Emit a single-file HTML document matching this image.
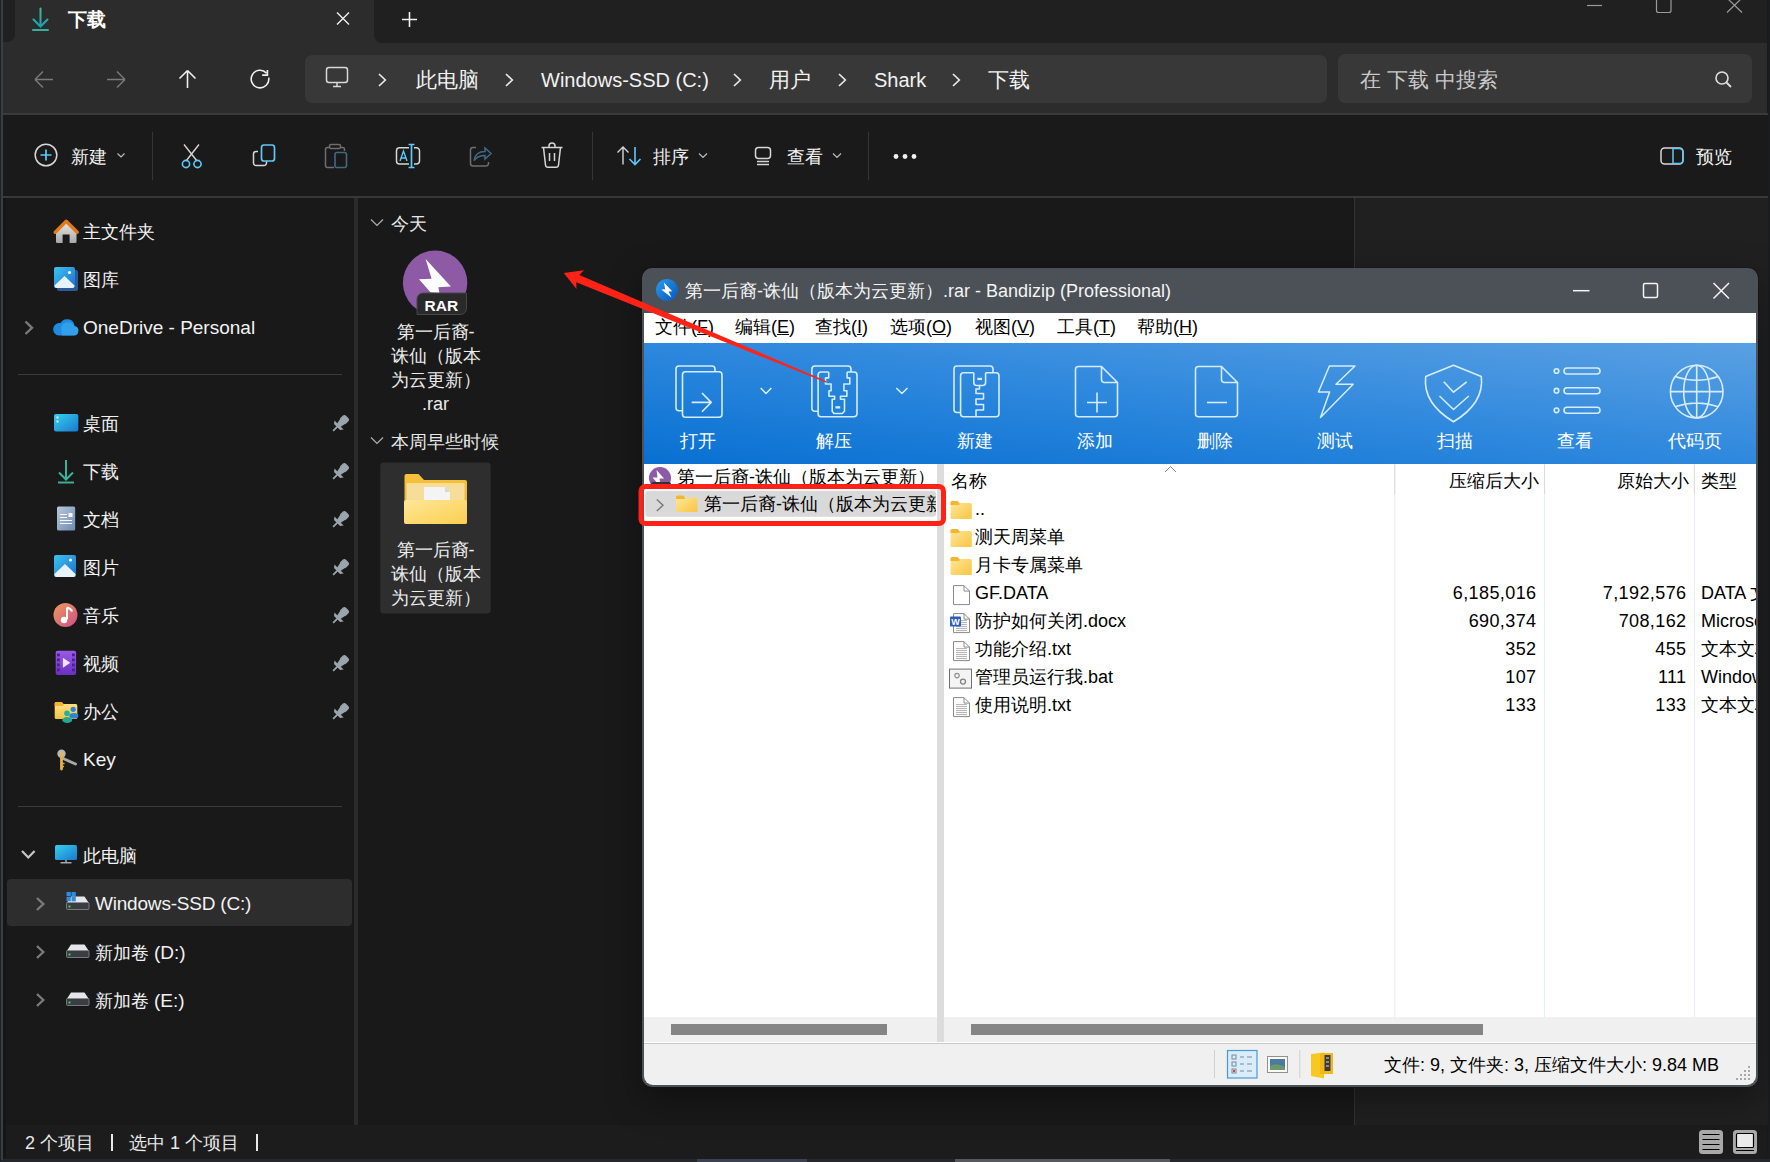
<!DOCTYPE html>
<html><head><meta charset="utf-8">
<style>
*{margin:0;padding:0;box-sizing:border-box}
html,body{width:1770px;height:1162px;overflow:hidden;background:#1a1c1e;font-family:"Liberation Sans",sans-serif;}
.a{position:absolute}
.t{position:absolute;white-space:nowrap;line-height:1}
svg{position:absolute;overflow:visible}
#exp{left:0;top:0;width:1768px;height:1160px;background:#191919;border-radius:0 0 8px 8px;overflow:hidden}
</style></head><body>
<div class="a" style="left:0;top:0;width:3px;height:1162px;background:#2a2d31"></div>
<div id="exp" class="a">

  <!-- title bar dark pieces -->
  <div class="a" style="left:0;top:0;width:1767px;height:113px;background:#2c2c2c"></div>
  <div class="a" style="left:0;top:0;width:15px;height:42px;background:#202020;border-radius:0 0 8px 0"></div>
  <div class="a" style="left:374px;top:0;width:1393px;height:43px;background:#202020;border-radius:0 0 0 8px"></div>
  <div class="a" style="left:15px;top:-8px;width:359px;height:51px;background:#2c2c2c;border-radius:8px 8px 0 0"></div>
  <!-- tab icon -->
  <svg style="left:0;top:0" width="60" height="40"><defs><linearGradient id="dl" x1="0" y1="0" x2="0" y2="1"><stop offset="0" stop-color="#3fbf8f"/><stop offset="1" stop-color="#1aa0b8"/></linearGradient></defs>
   <path d="M40.5 8.5V26.5M33.5 19.5L40.5 26.5L47.5 19.5" stroke="url(#dl)" stroke-width="2" fill="none" stroke-linecap="round"/>
   <path d="M33 30H48" stroke="#2fb49c" stroke-width="2" stroke-linecap="round"/></svg>
  <div class="t" style="left:67.5px;top:11px;font-size:18.5px;font-weight:bold;color:#fff">下载</div>
  <svg style="left:0;top:0" width="430" height="40"><path d="M337 12.5L349 24.5M349 12.5L337 24.5" stroke="#f0f0f0" stroke-width="1.4"/>
   <path d="M402 19.5H417M409.5 12V27" stroke="#f0f0f0" stroke-width="1.6"/></svg>
  <!-- window controls -->
  <svg style="left:0;top:0" width="1767" height="40"><path d="M1587 5.5H1602" stroke="#9a9a9a" stroke-width="1.2"/>
   <path d="M1656.5 -4V10.5a2 2 0 0 0 2 2H1669a2 2 0 0 0 2-2V-4" stroke="#9a9a9a" stroke-width="1.2" fill="none"/>
   <path d="M1727 -2L1742 12.5M1742 -2L1727 12.5" stroke="#9a9a9a" stroke-width="1.2"/></svg>
  <!-- nav -->
  <svg style="left:0;top:0" width="300" height="110">
   <path d="M35 79.5H53M35 79.5L43 71.5M35 79.5L43 87.5" stroke="#7a7a7a" stroke-width="1.5" fill="none"/>
   <path d="M107 79.5H125M125 79.5L117 71.5M125 79.5L117 87.5" stroke="#7a7a7a" stroke-width="1.5" fill="none"/>
   <path d="M187.5 70.5V88M187.5 70.5L179.5 78.5M187.5 70.5L195.5 78.5" stroke="#f0f0f0" stroke-width="1.6" fill="none"/>
   <path d="M266.5 73.1A8.8 8.8 0 1 0 268.7 77.6" stroke="#f0f0f0" stroke-width="1.6" fill="none"/>
   <path d="M262.2 75.2H267.4V70.1" stroke="#f0f0f0" stroke-width="1.7" fill="none"/>
  </svg>
  <!-- breadcrumb -->
  <div class="a" style="left:305px;top:54.5px;width:1022px;height:48.5px;background:#383838;border-radius:7px"></div>
  <svg style="left:0;top:0" width="1100" height="110">
   <rect x="326.5" y="67.5" width="21" height="15" rx="2.5" stroke="#d8d8d8" stroke-width="1.5" fill="none"/>
   <path d="M333 86.5H341M337 83V86.5" stroke="#d8d8d8" stroke-width="1.5"/>
   <g stroke="#e8e8e8" stroke-width="1.7" fill="none"><path d="M379 74L385.3 80L379 86"/><path d="M506 74L512.3 80L506 86"/><path d="M734 74L740.3 80L734 86"/><path d="M839 74L845.3 80L839 86"/><path d="M953 74L959.3 80L953 86"/></g>
  </svg>
  <div class="t" style="left:416px;top:69px;font-size:21px;color:#f2f2f2">此电脑</div>
  <div class="t" style="left:541px;top:69.5px;font-size:20px;color:#f2f2f2">Windows-SSD (C:)</div>
  <div class="t" style="left:769px;top:69px;font-size:21px;color:#f2f2f2">用户</div>
  <div class="t" style="left:874px;top:69.5px;font-size:20px;color:#f2f2f2">Shark</div>
  <div class="t" style="left:988px;top:69px;font-size:21px;color:#f2f2f2">下载</div>
  <!-- search -->
  <div class="a" style="left:1338px;top:54px;width:414px;height:49px;background:#383838;border-radius:7px"></div>
  <div class="t" style="left:1360px;top:69px;font-size:21px;color:#c8c8c8">在 下载 中搜索</div>
  <svg style="left:0;top:0" width="1767" height="110"><circle cx="1722" cy="78" r="6" stroke="#e0e0e0" stroke-width="1.6" fill="none"/><path d="M1726.5 82.5L1731 87" stroke="#e0e0e0" stroke-width="1.8"/></svg>
  <div class="a" style="left:0;top:113px;width:1768px;height:2px;background:#3a3a3a"></div>
  <!-- toolbar -->
  <div class="a" style="left:0;top:115px;width:1768px;height:81px;background:#1a1a1a"></div>
  <div class="a" style="left:0;top:196px;width:1768px;height:2px;background:#383838"></div>

  <!-- toolbar content -->
  <svg style="left:0;top:0" width="1767" height="196">
   <g fill="none" stroke-width="1.5">
    <circle cx="46" cy="155" r="10.8" stroke="#d6d6d6"/>
    <path d="M46 149.5V160.5M40.5 155H51.5" stroke="#60c8f8" stroke-width="1.7"/>
    <path d="M117.5 153.5L121 157L124.5 153.5" stroke="#bbb" stroke-width="1.2"/>
    <path d="M152.5 132V180M592.5 132V180M868.5 132V180" stroke="#353535" stroke-width="1"/>
    <!-- scissors -->
    <path d="M184 144.5L197 161M199 144.5L186 161" stroke="#d6d6d6" stroke-width="1.4"/>
    <circle cx="186" cy="164" r="3.6" stroke="#60c8f8" stroke-width="1.6"/><circle cx="197.5" cy="164" r="3.6" stroke="#60c8f8" stroke-width="1.6"/>
    <!-- copy -->
    <path d="M258 151.5H256a2.5 2.5 0 0 0-2.5 2.5V163a2.5 2.5 0 0 0 2.5 2.5H264a2.5 2.5 0 0 0 2.5-2.5V161" stroke="#d6d6d6"/>
    <rect x="261.5" y="145" width="13" height="16" rx="2.5" stroke="#60c8f8" stroke-width="1.7"/>
    <!-- paste dim -->
    <path d="M329 147.5H327.5a2 2 0 0 0-2 2V165.5a2 2 0 0 0 2 2H334M341 147.5H342.5a2 2 0 0 1 2 2V151" stroke="#6e6e6e"/>
    <rect x="329.5" y="144.5" width="11" height="4" rx="1.5" stroke="#6e6e6e"/>
    <rect x="335" y="152.5" width="11.5" height="15" rx="2" stroke="#3f6a82" stroke-width="1.6"/>
    <!-- rename -->
    <path d="M409 147.8H399.5a3 3 0 0 0-3 3V161a3 3 0 0 0 3 3H409M414 147.8H416.5a3 3 0 0 1 3 3V161a3 3 0 0 1-3 3H414" stroke="#d6d6d6"/>
    <path d="M400 161L403.5 151L407 161M401.2 158H405.8" stroke="#60c8f8" stroke-width="1.4"/>
    <path d="M411.5 144.5V167.5M408.5 144.5H414.5M408.5 167.5H414.5" stroke="#60c8f8" stroke-width="1.7"/>
    <!-- share dim -->
    <path d="M476 147.5H473a2.5 2.5 0 0 0-2.5 2.5V163.5a2.5 2.5 0 0 0 2.5 2.5H486a2.5 2.5 0 0 0 2.5-2.5V162" stroke="#6e6e6e"/>
    <path d="M474 160.5C475 154 480 151.5 485 151.5V148L491 153.5L485 159V155.5C480 155.5 476.5 157 474 160.5Z" stroke="#3f6a82" stroke-width="1.5"/>
    <!-- delete -->
    <path d="M541.5 147.5H562.5M549 147.5V146a3 3 0 0 1 6 0V147.5M543.5 147.5L545.5 165a2.5 2.5 0 0 0 2.5 2.3H556a2.5 2.5 0 0 0 2.5-2.3L560.5 147.5M549.5 153V161M554.5 153V161" stroke="#d6d6d6" stroke-width="1.5"/>
    <!-- sort -->
    <path d="M623 164.5V147M617.5 152.5L623 147L628.5 152.5" stroke="#d6d6d6" stroke-width="1.4"/>
    <path d="M635 147V164.5M629.5 159L635 164.5L640.5 159" stroke="#60c8f8" stroke-width="1.6"/>
    <path d="M699 153.5L703 157.5L707 153.5M833 153.5L837 157.5L841 153.5" stroke="#bbb" stroke-width="1.2"/>
    <!-- view -->
    <rect x="755.5" y="147.5" width="15" height="11" rx="3" stroke="#d6d6d6" stroke-width="1.5"/>
    <path d="M757 161.5H769M757 164.5H769" stroke="#d6d6d6" stroke-width="1.4"/>
    <!-- preview -->
    <rect x="1661" y="148" width="22" height="16" rx="3.5" stroke="#d6d6d6" stroke-width="1.5"/>
    <path d="M1673 148.5H1679.5a3.3 3.3 0 0 1 3.3 3.3V160.2a3.3 3.3 0 0 1-3.3 3.3H1673Z" stroke="#60c8f8" stroke-width="1.5"/>
   </g>
   <circle cx="896" cy="156.5" r="2.4" fill="#f0f0f0"/><circle cx="905" cy="156.5" r="2.4" fill="#f0f0f0"/><circle cx="914" cy="156.5" r="2.4" fill="#f0f0f0"/>
  </svg>
  <div class="t" style="left:71px;top:147.5px;font-size:18px;color:#f2f2f2">新建</div>
  <div class="t" style="left:653px;top:147.5px;font-size:18px;color:#f2f2f2">排序</div>
  <div class="t" style="left:787px;top:147.5px;font-size:18px;color:#f2f2f2">查看</div>
  <div class="t" style="left:1696px;top:147.5px;font-size:18px;color:#f2f2f2">预览</div>
  <!-- preview pane -->
  <div class="a" style="left:1354px;top:198px;width:414px;height:927px;background:#202020;border-left:1px solid #333"></div>
  <!-- sidebar divider -->
  <div class="a" style="left:354px;top:198px;width:4px;height:927px;background:#2a2a2a"></div>

  <!-- content -->
  <svg style="left:0;top:0" width="520" height="630">
   <defs>
    <linearGradient id="fb" x1="0" y1="0" x2="0" y2="1"><stop offset="0" stop-color="#f7c23a"/><stop offset="1" stop-color="#eab02e"/></linearGradient>
    <linearGradient id="ff" x1="0" y1="0" x2="1" y2="1"><stop offset="0" stop-color="#ffe79a"/><stop offset="1" stop-color="#fbcf4e"/></linearGradient>
   </defs>
   <path d="M371 219.5L377 225.5L383 219.5M371 437.5L377 443.5L383 437.5" stroke="#b0b0b0" stroke-width="1.2" fill="none"/>
   <circle cx="435.1" cy="282.8" r="32.2" fill="#8e5aa6"/>
   <path d="M425.6 259.1L450.9 286.6L438.3 287.2L439.5 293L430.7 292.6L419 279.3L431.6 278.7Z" fill="#fff"/>
   <path d="M417 314.5V299a6 6 0 0 1 6-6H466.5V308.5a6 6 0 0 1-6 6Z" fill="#2a2a2a" stroke="#474747" stroke-width="1"/>
   <rect x="380.3" y="462.5" width="110.3" height="151" rx="3" fill="#2e2e2e"/>
   <path d="M404.5 476a2 2 0 0 1 2-2H418.5L424 480H465a2 2 0 0 1 2 2V522a2 2 0 0 1-2 2H406.5a2 2 0 0 1-2-2Z" fill="url(#fb)"/>
   <rect x="406.5" y="483" width="58" height="30" rx="1" fill="#f6dd9a"/>
   <path d="M424 487H445L450 492V505H424Z" fill="#f4f4f4"/><path d="M445 487V492H450" fill="#d8d8d8"/>
   <path d="M404 502a2 2 0 0 1 2-2H465a2 2 0 0 1 2 2V522a2 2 0 0 1-2 2H406a2 2 0 0 1-2-2Z" fill="url(#ff)"/>
  </svg>
  <div class="t" style="left:424.5px;top:298px;font-size:15.5px;font-weight:bold;color:#fff">RAR</div>
  <div class="t" style="left:391px;top:215px;font-size:18px;color:#e8e8e8">今天</div>
  <div class="t" style="left:391px;top:433px;font-size:18px;color:#e8e8e8">本周早些时候</div>
  <div class="a" style="left:380px;top:320px;width:111px;text-align:center;font-size:18px;line-height:24px;color:#ececec;white-space:nowrap">第一后裔-<br>诛仙（版本<br>为云更新）<br>.rar</div>
  <div class="a" style="left:380px;top:538px;width:111px;text-align:center;font-size:18px;line-height:24px;color:#ececec;white-space:nowrap">第一后裔-<br>诛仙（版本<br>为云更新）</div>
  <!-- status bar -->
  <div class="a" style="left:0;top:1125px;width:1767px;height:35px;background:#1c1c1c"></div>
  <!-- sidebar -->
  <div class="a" style="left:18px;top:374px;width:324px;height:1px;background:#3a3a3a"></div>
  <div class="a" style="left:18px;top:806px;width:324px;height:1px;background:#3a3a3a"></div>
  <div class="a" style="left:7px;top:879px;width:345px;height:47px;background:#2d2d2d;border-radius:4px"></div>
  <svg style="left:0;top:0" width="360" height="1020">
   <defs>
    <linearGradient id="hb" x1="0" y1="0" x2="0" y2="1"><stop offset="0" stop-color="#e8e8e8"/><stop offset="1" stop-color="#a8a8a8"/></linearGradient>
    <linearGradient id="bl" x1="0" y1="0" x2="1" y2="1"><stop offset="0" stop-color="#3cc4f0"/><stop offset="1" stop-color="#1a6fd0"/></linearGradient>
    <linearGradient id="cy" x1="0" y1="0" x2="1" y2="1"><stop offset="0" stop-color="#34d0ee"/><stop offset="1" stop-color="#1b78cf"/></linearGradient>
    <linearGradient id="dc" x1="0" y1="0" x2="1" y2="1"><stop offset="0" stop-color="#b8c8dc"/><stop offset="1" stop-color="#6d8bb0"/></linearGradient>
    <linearGradient id="mu" x1="0" y1="0" x2="1" y2="1"><stop offset="0" stop-color="#f29a5a"/><stop offset="1" stop-color="#c8508a"/></linearGradient>
    <linearGradient id="vi" x1="0" y1="0" x2="0" y2="1"><stop offset="0" stop-color="#9a5ae8"/><stop offset="1" stop-color="#6a30c0"/></linearGradient>
    <linearGradient id="fo" x1="0" y1="0" x2="0" y2="1"><stop offset="0" stop-color="#ffe48a"/><stop offset="1" stop-color="#f5c242"/></linearGradient>
   </defs>
   <!-- home -->
   <path d="M56 232V241.8a1.3 1.3 0 0 0 1.3 1.3H62.6V234.5H69.6V243.1H75.2a1.3 1.3 0 0 0 1.3-1.3V232L66.2 222Z" fill="url(#hb)"/>
   <path d="M55.2 232.2L66.2 221.3L77.2 232.2" stroke="#e27a18" stroke-width="3.4" fill="none" stroke-linejoin="round" stroke-linecap="round"/>
   <!-- gallery -->
   <rect x="57" y="270" width="21" height="21" rx="2" fill="#2a5a9a"/>
   <rect x="54" y="267" width="21" height="21" rx="2" fill="url(#bl)"/>
   <path d="M54.5 285.5L64.5 276L74.5 285.5V286a2 2 0 0 1-2 2H56.5a2 2 0 0 1-2-2Z" fill="#e8f2fc"/>
   <circle cx="69.5" cy="272.5" r="1.6" fill="#fff"/>
   <!-- onedrive -->
   <path d="M25.5 321.5L32 327.8L25.5 334" stroke="#7a7a7a" stroke-width="2.4" fill="none"/>
   <path d="M58.5 335.5H73.5a4.8 4.8 0 0 0 1-9.5 7.5 7.5 0 0 0-14-3 5.8 5.8 0 0 0-2 12.5Z" fill="#1e8ae0"/>
   <path d="M61 327a7.5 7.5 0 0 1 13.5-1 4.8 4.8 0 0 1 -1 9.5H62Z" fill="#3aa8f0" opacity=".7"/>
   <!-- desktop -->
   <rect x="54" y="414" width="24.3" height="17.6" rx="2" fill="url(#cy)"/>
   <rect x="56.5" y="416.5" width="2" height="2" fill="#e6f6ff"/><rect x="56.5" y="420.5" width="2" height="2" fill="#e6f6ff"/>
   <!-- downloads -->
   <path d="M66 460V479.5M59 472.5L66 479.5L73 472.5" stroke="#38b49a" stroke-width="2" fill="none"/>
   <path d="M58 482.5H74" stroke="#3cae94" stroke-width="2"/>
   <!-- docs -->
   <rect x="57" y="506.6" width="18.2" height="24" rx="1.5" fill="url(#dc)"/>
   <path d="M60 514.5H67M60 517.5H67M60 520.5H72M60 523.5H72" stroke="#f4f6fa" stroke-width="1.2"/>
   <rect x="68.5" y="513" width="4" height="4" fill="#f4f6fa"/>
   <!-- pictures -->
   <rect x="54" y="555" width="22" height="22" rx="2" fill="url(#bl)"/>
   <path d="M54.5 574L65 564L75.5 574V575a2 2 0 0 1-2 2H56.5a2 2 0 0 1-2-2Z" fill="#e8f2fc"/>
   <circle cx="70.5" cy="560" r="1.6" fill="#fff"/>
   <!-- music -->
   <circle cx="65.5" cy="615" r="12" fill="url(#mu)"/>
   <path d="M67 607.5V619.5" stroke="#fff" stroke-width="2"/><path d="M67 607.5Q71 608.5 72 611.5" stroke="#fff" stroke-width="2.2" fill="none"/>
   <circle cx="64" cy="620" r="3.2" fill="#fff"/>
   <!-- video -->
   <rect x="55.7" y="650.8" width="20.4" height="24.2" rx="2" fill="url(#vi)"/>
   <g fill="#4a2090"><rect x="57" y="653.5" width="2.8" height="2.8"/><rect x="57" y="658.5" width="2.8" height="2.8"/><rect x="57" y="663.5" width="2.8" height="2.8"/><rect x="57" y="668.5" width="2.8" height="2.8"/>
   <rect x="72" y="653.5" width="2.8" height="2.8"/><rect x="72" y="658.5" width="2.8" height="2.8"/><rect x="72" y="663.5" width="2.8" height="2.8"/><rect x="72" y="668.5" width="2.8" height="2.8"/></g>
   <path d="M62.9 657.8L70.3 662.8L62.9 667.8Z" fill="#f0e4ff"/>
   <!-- office folder -->
   <path d="M54.7 703.5a1.5 1.5 0 0 1 1.5-1.5H61.5L63.5 704H75.8a1.5 1.5 0 0 1 1.5 1.5V717.5a1.5 1.5 0 0 1-1.5 1.5H56.2a1.5 1.5 0 0 1-1.5-1.5Z" fill="url(#fo)"/>
   <path d="M54.7 703.5a1.5 1.5 0 0 1 1.5-1.5H61.5L63.5 704V706H54.7Z" fill="#f2b531"/>
   <circle cx="73.2" cy="709.3" r="2.6" fill="#2a86d6"/><ellipse cx="73.8" cy="715.8" rx="4.6" ry="2.8" fill="#2a86d6"/>
   <circle cx="67" cy="713.3" r="2.8" fill="#25b09a"/><ellipse cx="67.2" cy="720" rx="5" ry="3" fill="#23a894"/>
   <!-- key -->
   <path d="M62 758L75.5 764" stroke="#a8a8a8" stroke-width="3" stroke-linecap="round"/>
   <circle cx="61.5" cy="753.8" r="4.2" fill="#b8b8b8"/>
   <path d="M61.5 755V769" stroke="#e8b04a" stroke-width="2.8" stroke-linecap="round"/>
   <path d="M62.5 763.5H64.5M62.5 766.5H64" stroke="#e8b04a" stroke-width="1.4"/>
   <circle cx="61.5" cy="753.5" r="1.6" fill="#e6b850"/>
   <!-- pins -->
   <g fill="#9aa4aa">
    <path id="pin" transform="translate(338.9 425.2) rotate(45) scale(1.2)" d="M-3.3 -8a1.7 1.7 0 0 1 1.7-1.7H1.6a1.7 1.7 0 0 1 1.7 1.7V-4.3H-3.3ZM-3 -4.6H3L1.8 0.5H-1.8ZM-5.4 -0.2H5.4L3.6 2.2H-3.6ZM-0.75 1.5H0.75V6.8H-0.75Z"/>
    <use href="#pin" y="48"/><use href="#pin" y="96"/><use href="#pin" y="144"/><use href="#pin" y="192"/><use href="#pin" y="240"/><use href="#pin" y="288"/>
   </g>
   <!-- this pc -->
   <path d="M22 851L28.3 857.5L34.6 851" stroke="#c8c8c8" stroke-width="2.2" fill="none"/>
   <rect x="55" y="845" width="22" height="15" rx="1.5" fill="url(#cy)"/>
   <path d="M60.5 862.8H71.5M66 860V862.5" stroke="#a0a8b0" stroke-width="1.6"/>
   <!-- drives -->
   <g stroke="#7a7a7a" stroke-width="2.4" fill="none"><path d="M37 898L43.3 904L37 910"/><path d="M37 946L43.3 952L37 958"/><path d="M37 994L43.3 1000L37 1006"/></g>
   <g id="drv">
    <path d="M66.8 903L71 896.5H84.5L88.8 903Z" fill="#e4e6ea"/>
    <rect x="66.5" y="902.5" width="22.5" height="7" rx="1" fill="#3a3d42" stroke="#8a8c90" stroke-width=".8"/>
    <rect x="68.5" y="905.5" width="2" height="2" fill="#4ad04a"/>
   </g>
   <use href="#drv" y="48"/><use href="#drv" y="96"/>
   <rect x="66.5" y="892" width="4.3" height="4.3" fill="#2d8de0"/><rect x="71.5" y="892" width="4.3" height="4.3" fill="#2d8de0"/>
   <rect x="66.5" y="897" width="4.3" height="4.3" fill="#2d8de0"/><rect x="71.5" y="897" width="4.3" height="4.3" fill="#2d8de0"/>
  </svg>
  <div class="t" style="left:83px;top:222.5px;font-size:18px;color:#f2f2f2">主文件夹</div>
  <div class="t" style="left:83px;top:270.5px;font-size:18px;color:#f2f2f2">图库</div>
  <div class="t" style="left:83px;top:318px;font-size:19px;color:#f2f2f2">OneDrive - Personal</div>
  <div class="t" style="left:83px;top:414.5px;font-size:18px;color:#f2f2f2">桌面</div>
  <div class="t" style="left:83px;top:462.5px;font-size:18px;color:#f2f2f2">下载</div>
  <div class="t" style="left:83px;top:510.5px;font-size:18px;color:#f2f2f2">文档</div>
  <div class="t" style="left:83px;top:558.5px;font-size:18px;color:#f2f2f2">图片</div>
  <div class="t" style="left:83px;top:606.5px;font-size:18px;color:#f2f2f2">音乐</div>
  <div class="t" style="left:83px;top:654.5px;font-size:18px;color:#f2f2f2">视频</div>
  <div class="t" style="left:83px;top:702.5px;font-size:18px;color:#f2f2f2">办公</div>
  <div class="t" style="left:83px;top:750px;font-size:19px;color:#f2f2f2">Key</div>
  <div class="t" style="left:83px;top:846.5px;font-size:18px;color:#f2f2f2">此电脑</div>
  <div class="t" style="left:95px;top:894px;font-size:19px;color:#f2f2f2;letter-spacing:-0.2px">Windows-SSD (C:)</div>
  <div class="t" style="left:95px;top:942.5px;font-size:18px;color:#f2f2f2">新加卷 <span style="font-size:19px">(D:)</span></div>
  <div class="t" style="left:95px;top:990.5px;font-size:18px;color:#f2f2f2">新加卷 <span style="font-size:19px">(E:)</span></div>
  <!-- status bar -->
  <div class="t" style="left:25px;top:1133.5px;font-size:18px;color:#e8e8e8">2 个项目</div>
  <div class="a" style="left:111px;top:1134px;width:2px;height:17px;background:#e8e8e8"></div>
  <div class="t" style="left:129px;top:1133.5px;font-size:18px;color:#e8e8e8">选中 1 个项目</div>
  <div class="a" style="left:256px;top:1134px;width:2px;height:17px;background:#e8e8e8"></div>

</div>

<!-- Bandizip window -->
<div class="a" style="left:642px;top:268px;width:1116px;height:819px;background:#4b5157;border-radius:10px;box-shadow:0 0 0 1px rgba(20,20,20,.5),0 12px 36px rgba(0,0,0,.38)"></div>
<svg style="left:0;top:0" width="1770" height="1162">
 <defs>
  <linearGradient id="bzb" x1="0" y1="0" x2="0" y2="1"><stop offset="0" stop-color="#2f8ce6"/><stop offset="1" stop-color="#006fd6"/></linearGradient>
  <linearGradient id="bzi" x1="0" y1="0" x2="1" y2="1"><stop offset="0" stop-color="#2a9af0"/><stop offset="1" stop-color="#0a56b8"/></linearGradient>
 </defs>
 <circle cx="667" cy="290" r="11" fill="url(#bzi)"/>
 <path d="M663.9 282.6L672.2 291.2L668.6 291.4L671.4 297.6L661.3 289.4L665.2 289.3Z" fill="#fff"/>
 <g stroke="#f4f4f4" stroke-width="1.5" fill="none">
  <path d="M1573 290.7H1589.5"/>
  <rect x="1643.5" y="283.5" width="14" height="14" rx="1.5"/>
  <path d="M1713.5 283L1729 298.5M1729 283L1713.5 298.5"/>
 </g>
</svg>
<div class="t" style="left:685px;top:281.5px;font-size:18px;color:#f4f4f4">第一后裔-诛仙（版本为云更新）<span>.rar - Bandizip (Professional)</span></div>
<!-- client -->
<div class="a" style="left:644px;top:313px;width:1112px;height:772px;background:#f0f0f0;border-radius:0 0 9px 9px;overflow:hidden">
 <div class="a" style="left:0;top:0;width:1112px;height:30px;background:#fff"></div>
 <div class="a" style="left:0;top:30px;width:1112px;height:120.5px;background:linear-gradient(to top right,#0870d2 0%,#2e88dd 50%,#5aa0e3 100%)"></div>
 <div class="a" style="left:0;top:150.5px;width:293px;height:553.5px;background:#fff"></div>
 <div class="a" style="left:293px;top:150.5px;width:7px;height:579.5px;background:#dcdcdc"></div>
 <div class="a" style="left:300px;top:150.5px;width:812px;height:553.5px;background:#fff"></div>
 <div class="a" style="left:0;top:729px;width:1112px;height:1px;background:#fff"></div><div class="a" style="left:0;top:730px;width:1112px;height:1px;background:#c8c8c8"></div>
</div>

<!-- bandizip menu -->
<div class="t" style="left:655px;top:317.5px;font-size:18px;color:#000">文件(<u>F</u>)</div>
<div class="t" style="left:735px;top:317.5px;font-size:18px;color:#000">编辑(<u>E</u>)</div>
<div class="t" style="left:815px;top:317.5px;font-size:18px;color:#000">查找(<u>I</u>)</div>
<div class="t" style="left:890px;top:317.5px;font-size:18px;color:#000">选项(<u>O</u>)</div>
<div class="t" style="left:975px;top:317.5px;font-size:18px;color:#000">视图(<u>V</u>)</div>
<div class="t" style="left:1057px;top:317.5px;font-size:18px;color:#000">工具(<u>T</u>)</div>
<div class="t" style="left:1137px;top:317.5px;font-size:18px;color:#000">帮助(<u>H</u>)</div>
<!-- bandizip toolbar icons -->
<svg style="left:0;top:0" width="1770" height="1162">
 <g stroke="#d6ecff" stroke-width="1.6" fill="none" stroke-linejoin="round">
  <!-- open -->
  <path d="M682.5 410.8H679a3 3 0 0 1-3-3V369a3 3 0 0 1 3-3H712a3 3 0 0 1 3 3V371.8"/>
  <rect x="682.5" y="371.8" width="39.5" height="45.4" rx="3"/>
  <path d="M691.7 402.4H711M702 393L711.2 402.4L702 411.8"/>
  <path d="M760.7 388L766 393.5L771.4 388M896.3 388L901.9 393.5L907.5 388"/>
  <!-- extract -->
  <path d="M818.1 411.2H814.9a3 3 0 0 1-3-3V369a3 3 0 0 1 3-3H848a3 3 0 0 1 3 3V372"/>
  <path d="M828.7 372H821.1a3 3 0 0 0-3 3V413.8a3 3 0 0 0 3 3H854a3 3 0 0 0 3-3V375a3 3 0 0 0-3-3H847.1"/>
  <path d="M828.7 372V377.9H825.5V384H831.1V390.7H829V396.3H834.6V399.2H832.2V411.2L834 413.5H842.3L844.5 411.2V399.2H840.5V396.3H846.9V390.7H843.9V384H849.8V377.9H847.1V372"/>
  <rect x="835.4" y="406.2" width="4.8" height="2.3" fill="#d6ecff" stroke="none"/>
  <!-- new -->
  <path d="M960.6 412.5H957a3 3 0 0 1-3-3V369a3 3 0 0 1 3-3H990a3 3 0 0 1 3 3V372.8"/>
  <path d="M973.8 372.8H963.6a3 3 0 0 0-3 3V413.7a3 3 0 0 0 3 3H996a3 3 0 0 0 3-3V375.8a3 3 0 0 0-3-3H985.6"/>
  <path d="M973.8 372.8V382.5a3 3 0 0 0 3 3H982.6a3 3 0 0 0 3-3V372.8"/>
  <rect x="977.3" y="377.8" width="4.8" height="2.3" fill="#d6ecff" stroke="none"/>
  <path d="M979.5 385.5V389H976V393.5H983.5V399H976V404.5H983.5V410H976V416.7"/>
  <!-- add -->
  <path d="M1101.5 366.5H1078.5a3 3 0 0 0-3 3V413.7a3 3 0 0 0 3 3H1114.5a3 3 0 0 0 3-3V382.5ZM1101.5 366.5V379.5a3 3 0 0 0 3 3H1117.5"/>
  <path d="M1087 402.5H1107M1097 392.5V412.5"/>
  <!-- delete -->
  <path d="M1221.5 366.5H1198.5a3 3 0 0 0-3 3V413.7a3 3 0 0 0 3 3H1234.5a3 3 0 0 0 3-3V382.5ZM1221.5 366.5V379.5a3 3 0 0 0 3 3H1237.5"/>
  <path d="M1207 402.5H1227"/>
  <!-- test -->
  <path d="M1329.4 366H1355L1336 384.3H1353.2L1320.5 417.5L1329.6 392H1318.5Z" stroke-width="1.5"/>
  <!-- scan -->
  <path d="M1453.5 365.2L1481.3 376.5Q1484.5 403 1453.5 421.8Q1422.5 403 1425.7 376.5Z"/>
  <path d="M1443.8 381.8L1453.5 392.2L1466.7 381.8M1439.5 396L1453.5 409.5L1468.8 396"/>
  <!-- view list -->
  <circle cx="1556.5" cy="371" r="2.3"/><circle cx="1556.5" cy="390.7" r="2.3"/><circle cx="1556.5" cy="410.3" r="2.3"/>
  <rect x="1564" y="368" width="36" height="6" rx="3"/><rect x="1564" y="387.7" width="36" height="6" rx="3"/><rect x="1564" y="407.3" width="36" height="6" rx="3"/>
  <!-- globe -->
  <circle cx="1696.7" cy="391.6" r="26.3"/>
  <ellipse cx="1696.7" cy="391.6" rx="13" ry="26.3"/>
  <path d="M1696.7 365.3V417.9M1670.4 391.6H1723M1675 376.5Q1696.7 384 1718.4 376.5M1675 406.7Q1696.7 399.2 1718.4 406.7"/>
 </g>
</svg>
<div class="t" style="left:680px;top:432px;font-size:18px;color:#fff">打开</div>
<div class="t" style="left:816px;top:432px;font-size:18px;color:#fff">解压</div>
<div class="t" style="left:957px;top:432px;font-size:18px;color:#fff">新建</div>
<div class="t" style="left:1077px;top:432px;font-size:18px;color:#fff">添加</div>
<div class="t" style="left:1197px;top:432px;font-size:18px;color:#fff">删除</div>
<div class="t" style="left:1317px;top:432px;font-size:18px;color:#fff">测试</div>
<div class="t" style="left:1437px;top:432px;font-size:18px;color:#fff">扫描</div>
<div class="t" style="left:1557px;top:432px;font-size:18px;color:#fff">查看</div>
<div class="t" style="left:1668px;top:432px;font-size:18px;color:#fff">代码页</div>

<!-- tree & list -->
<div class="a" style="left:1694px;top:463px;width:62px;height:554px;overflow:hidden"></div>
<svg style="left:0;top:0" width="1770" height="1162">
 <defs>
  <linearGradient id="sf" x1="0" y1="0" x2="1" y2="1"><stop offset="0" stop-color="#ffe8a0"/><stop offset="1" stop-color="#f8c640"/></linearGradient>
  <g id="sfold">
   <path d="M950.5 500.5a1.5 1.5 0 0 1 1.5-1.5H957.5L959.5 501H970.3a1.5 1.5 0 0 1 1.5 1.5V516a1 1 0 0 1-1 1H951.5a1 1 0 0 1-1-1Z" fill="url(#sf)"/>
   <path d="M950.5 500.5a1.5 1.5 0 0 1 1.5-1.5H957.5L959.5 501.5V503H950.5Z" fill="#f0b830"/>
  </g>
  <g id="sblank"><path d="M953.5 499.5H964L969.5 505V518.5H953.5Z" fill="#fff" stroke="#8a8a8a" stroke-width="1"/><path d="M964 499.5V505H969.5" fill="none" stroke="#8a8a8a" stroke-width="1"/></g>
  <g id="stxt"><path d="M953.5 499.5H964L969.5 505V518.5H953.5Z" fill="#fff" stroke="#8a8a8a" stroke-width="1"/><path d="M964 499.5V505H969.5" fill="none" stroke="#8a8a8a" stroke-width="1"/>
   <path d="M956 506.5H967M956 508.5H967M956 510.5H967M956 512.5H967M956 514.5H967M956 516.5H967" stroke="#9a9a9a" stroke-width=".8"/></g>
 </defs>
 <path d="M1394.8 464V1017M1544.6 464V1017M1694.4 464V1017" stroke="#e6edf5" stroke-width="1"/><path d="M1394.8 464V494M1544.6 464V494M1694.4 464V494" stroke="#dadada" stroke-width="1"/>
 <path d="M1165 472L1170.5 466.5L1176 472" stroke="#8a8a8a" stroke-width="1" fill="none"/>
 <use href="#sfold" y="2.1"/>
 <use href="#sfold" y="30.1"/>
 <use href="#sfold" y="58.1"/>
 <use href="#sblank" y="86.1"/>
 <use href="#stxt" y="114.1"/><rect x="950" y="616.6" width="11" height="10" rx="1" fill="#2b5fb8"/><text x="951.2" y="625.2" font-size="9" font-weight="bold" fill="#fff" font-family="Liberation Sans">W</text>
 <use href="#stxt" y="142.1"/>
 <rect x="949.5" y="669.1" width="22" height="19" fill="#f4f4f4" stroke="#707070" stroke-width="1"/><circle cx="957" cy="675.6" r="2.2" fill="none" stroke="#909090" stroke-width="1.2"/><circle cx="963" cy="681.6" r="2.5" fill="none" stroke="#808080" stroke-width="1.3"/>
 <use href="#stxt" y="198.1"/>
 <!-- tree item 1 -->
 <circle cx="660" cy="478" r="11" fill="#8e5aa6"/>
 <path d="M656.5 470L664 478.5L659.5 478.5L660 482L656.5 482L652.5 477.5L657.5 477.5Z" fill="#fff"/>
 <rect x="651" y="482" width="20" height="7" rx="2" fill="#333"/>
 <!-- tree item 2 -->
 <rect x="645.2" y="491" width="290.9" height="25.8" rx="3" fill="#d9d9d9"/>
 <path d="M656.8 499.5L663 505.3L656.8 511" stroke="#777" stroke-width="1.4" fill="none"/>
 <path d="M676 497a1.5 1.5 0 0 1 1.5-1.5H683L685 497.5H696a1.5 1.5 0 0 1 1.5 1.5V511a1 1 0 0 1-1 1H677a1 1 0 0 1-1-1Z" fill="url(#sf)"/>
 <path d="M676 497a1.5 1.5 0 0 1 1.5-1.5H683L685 497.5V499H676Z" fill="#f0b830"/>
 <!-- scrollbars -->
 <rect x="671" y="1024" width="216" height="11" fill="#858585"/>
 <rect x="971" y="1024" width="512" height="11" fill="#858585"/>
 <!-- status bar icons -->
 <path d="M1214.5 1050V1078M1299.8 1050V1078" stroke="#d0d0d0" stroke-width="1"/>
 <rect x="1227.5" y="1050.5" width="29.5" height="27.5" fill="#d8ecfa" stroke="#4a9ad8" stroke-width="1.2"/>
 <g fill="none" stroke="#7a8a9a" stroke-width="1"><rect x="1232" y="1055" width="4" height="4"/><rect x="1232" y="1062" width="4" height="4"/><rect x="1232" y="1069" width="4" height="4"/></g>
 <rect x="1233" y="1070" width="2" height="2" fill="#e04040"/>
 <path d="M1240 1057H1244M1247 1057H1252M1240 1064H1244M1247 1064H1252M1240 1071H1244M1247 1071H1252" stroke="#7a8a9a" stroke-width="1.2"/>
 <rect x="1267.5" y="1056.5" width="20" height="16" fill="#fafafa" stroke="#909090" stroke-width="1"/>
 <rect x="1270" y="1059" width="15" height="11" fill="#4a7aa0"/><path d="M1270 1066Q1276 1062 1285 1067V1070H1270Z" fill="#6a9a6a"/>
 <path d="M1311 1054L1324 1052.5V1078.5L1311 1076Z" fill="#f8c820"/><rect x="1320" y="1053" width="13" height="21" fill="#f0b818"/>
 <rect x="1324.5" y="1055" width="6" height="16" fill="#3a3a3a"/><path d="M1326 1058H1329M1326 1062H1329M1326 1066H1329" stroke="#ddd" stroke-width="1"/>
 <g fill="#a8a8a8"><rect x="1748" y="1066" width="2" height="2"/><rect x="1744" y="1070" width="2" height="2"/><rect x="1748" y="1070" width="2" height="2"/><rect x="1740" y="1074" width="2" height="2"/><rect x="1744" y="1074" width="2" height="2"/><rect x="1748" y="1074" width="2" height="2"/><rect x="1736" y="1078" width="2" height="2"/><rect x="1740" y="1078" width="2" height="2"/><rect x="1744" y="1078" width="2" height="2"/><rect x="1748" y="1078" width="2" height="2"/></g>
</svg>
<div class="t" style="left:951px;top:471.5px;font-size:18px;color:#000">名称</div>
<div class="t" style="left:1400px;width:138.5px;text-align:right;top:471.5px;font-size:18px;color:#000">压缩后大小</div>
<div class="t" style="left:1550px;width:138.5px;text-align:right;top:471.5px;font-size:18px;color:#000">原始大小</div>
<div class="a" style="left:1700px;top:0;width:56px;height:1162px;overflow:hidden">
 <div class="t" style="left:1px;top:471.5px;font-size:18px;color:#000">类型</div>
 <div class="t" style="left:1px;top:584.1px;font-size:18px;color:#000">DATA 文件</div>
 <div class="t" style="left:1px;top:612.1px;font-size:18px;color:#000">Microsoft</div>
 <div class="t" style="left:1px;top:640.1px;font-size:18px;color:#000">文本文档</div>
 <div class="t" style="left:1px;top:668.1px;font-size:18px;color:#000">Windows</div>
 <div class="t" style="left:1px;top:696.1px;font-size:18px;color:#000">文本文档</div>
</div>
<div class="t" style="left:975px;top:500.1px;font-size:18px;color:#000">..</div>
<div class="t" style="left:975px;top:528.1px;font-size:18px;color:#000">测天周菜单</div>
<div class="t" style="left:975px;top:556.1px;font-size:18px;color:#000">月卡专属菜单</div>
<div class="t" style="left:975px;top:584.1px;font-size:18px;color:#000">GF.DATA</div>
<div class="t" style="left:1400px;width:136.5px;text-align:right;top:584.1px;font-size:18px;color:#000;letter-spacing:0.4px">6,185,016</div>
<div class="t" style="left:1550px;width:136.5px;text-align:right;top:584.1px;font-size:18px;color:#000;letter-spacing:0.4px">7,192,576</div>
<div class="t" style="left:975px;top:612.1px;font-size:18px;color:#000">防护如何关闭.docx</div>
<div class="t" style="left:1400px;width:136.5px;text-align:right;top:612.1px;font-size:18px;color:#000;letter-spacing:0.4px">690,374</div>
<div class="t" style="left:1550px;width:136.5px;text-align:right;top:612.1px;font-size:18px;color:#000;letter-spacing:0.4px">708,162</div>
<div class="t" style="left:975px;top:640.1px;font-size:18px;color:#000">功能介绍.txt</div>
<div class="t" style="left:1400px;width:136.5px;text-align:right;top:640.1px;font-size:18px;color:#000;letter-spacing:0.4px">352</div>
<div class="t" style="left:1550px;width:136.5px;text-align:right;top:640.1px;font-size:18px;color:#000;letter-spacing:0.4px">455</div>
<div class="t" style="left:975px;top:668.1px;font-size:18px;color:#000">管理员运行我.bat</div>
<div class="t" style="left:1400px;width:136.5px;text-align:right;top:668.1px;font-size:18px;color:#000;letter-spacing:0.4px">107</div>
<div class="t" style="left:1550px;width:136.5px;text-align:right;top:668.1px;font-size:18px;color:#000;letter-spacing:0.4px">111</div>
<div class="t" style="left:975px;top:696.1px;font-size:18px;color:#000">使用说明.txt</div>
<div class="t" style="left:1400px;width:136.5px;text-align:right;top:696.1px;font-size:18px;color:#000;letter-spacing:0.4px">133</div>
<div class="t" style="left:1550px;width:136.5px;text-align:right;top:696.1px;font-size:18px;color:#000;letter-spacing:0.4px">133</div>
<div class="a" style="left:677px;top:467.5px;width:258px;height:17px;overflow:hidden"><div class="t" style="left:0;top:0;font-size:18px;color:#000">第一后裔-诛仙（版本为云更新）</div></div>
<div class="a" style="left:704px;top:493.5px;width:232px;height:23px;overflow:hidden"><div class="t" style="left:0;top:1px;font-size:18px;color:#000">第一后裔-诛仙（版本为云更新）</div></div>
<div class="t" style="left:1384px;top:1055.5px;font-size:18px;color:#000">文件: 9, 文件夹: 3, 压缩文件大小: 9.84 MB</div>

<!-- explorer bottom-right view icons -->
<svg style="left:0;top:0" width="1770" height="1162">
 <rect x="1699" y="1130" width="24" height="24" rx="3.5" fill="#a9a9a9"/>
 <path d="M1702.5 1134.5H1719.5M1702.5 1139.5H1719.5M1702.5 1144.5H1719.5M1702.5 1149.5H1719.5" stroke="#000" stroke-width="1"/>
 <rect x="1733" y="1130" width="24" height="24" rx="3.5" fill="#a9a9a9"/>
 <rect x="1736.5" y="1133.5" width="17" height="14" rx="1" fill="#eaeaea" stroke="#000" stroke-width="1.2"/>
 <path d="M1736 1150.5H1754" stroke="#000" stroke-width="1"/>
 <!-- red annotations -->
 <path d="M563.8 273L584.1 270.2L579.3 275L826 381L826 382.5L576.2 282.3L576.5 289.1Z" fill="#ff2216"/>
 <rect x="641" y="486.5" width="302.5" height="37" rx="4.5" fill="none" stroke="#ff2216" stroke-width="5"/>
</svg>
<div class="a" style="left:0;top:1159px;width:1770px;height:3px;background:#24272b"></div><div class="a" style="left:697px;top:1159px;width:110px;height:3px;background:#3a4150"></div><div class="a" style="left:955px;top:1159px;width:215px;height:3px;background:#55585c"></div><div class="a" style="left:0;top:0;width:1px;height:1162px;background:#1e2124"></div><div class="a" style="left:1px;top:0;width:2px;height:1160px;background:#3b3e41"></div><div class="a" style="left:3px;top:198px;width:2.5px;height:960px;background:#151515"></div>
</body></html>
